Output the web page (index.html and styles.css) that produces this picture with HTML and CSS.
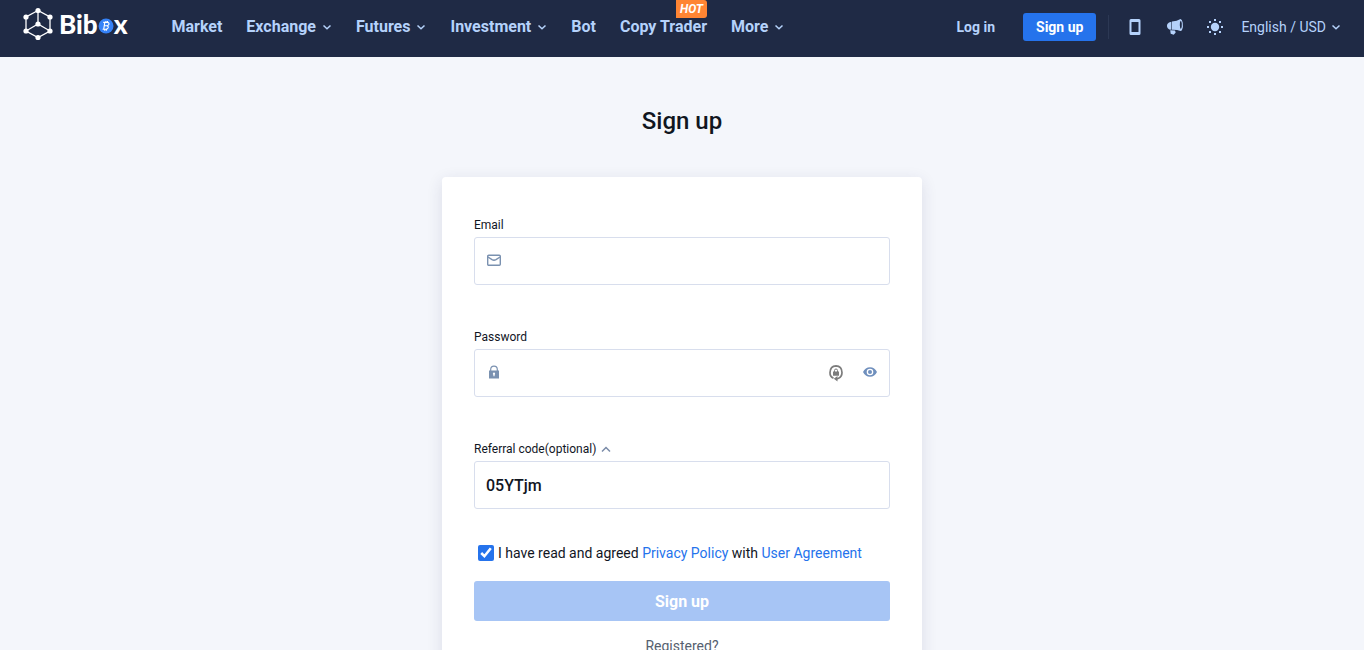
FILE: index.html
```
<!DOCTYPE html>
<html lang="en">
<head>
  <meta charset="utf-8">
  <title>Sign up | Bibox</title>
  <link rel="stylesheet" href="styles.css">
</head>
<body>
  <header class="header">
    <a class="logo" href="#" aria-label="Bibox">
      <svg class="logo-mark" viewBox="0 0 32 34">
        <path d="M15 3.500 3 10v14l12 6.500L27 24V10ZM15 3.500V17M3 24l12-7 12 7" fill="none" stroke="currentColor" stroke-width="1.300"/>
        <g fill="currentColor">
          <circle cx="15" cy="3.500" r="2.600"/>
          <circle cx="27" cy="10" r="2.600"/>
          <circle cx="27" cy="24" r="2.600"/>
          <circle cx="15" cy="30.500" r="2.600"/>
          <circle cx="3" cy="24" r="2.600"/>
          <circle cx="3" cy="10" r="2.600"/>
          <circle cx="15" cy="17" r="2.600"/>
        </g>
      </svg>
      <span class="logo-text">Bib</span>
      <svg class="logo-coin" viewBox="0 0 16 16">
        <circle cx="8" cy="8" r="7.500" fill="#3582f7"/>
        <path d="M6.800 4.300 5.700 11.300M5.200 4.400h4.200q2 .3 1.500 1.900-.4 1.400-2.300 1.500H6.500M8.600 7.800q2 .2 1.600 1.900-.4 1.500-2.300 1.500H4.600M8 3 7.800 4.400M9.600 3 9.400 4.400M6.900 11.200 6.700 12.700M8.500 11.200 8.300 12.700" fill="none" stroke="#fff" stroke-width="1.100"/>
      </svg>
      <span class="logo-text">x</span>
    </a>

    <nav class="nav">
      <a href="#">Market</a>
      <a href="#">Exchange <svg class="chevron" viewBox="0 0 10 10"><path d="m1.500 3.500 3.500 3.300 3.500-3.300"/></svg></a>
      <a href="#">Futures <svg class="chevron" viewBox="0 0 10 10"><path d="m1.500 3.500 3.500 3.300 3.500-3.300"/></svg></a>
      <a href="#">Investment <svg class="chevron" viewBox="0 0 10 10"><path d="m1.500 3.500 3.500 3.300 3.500-3.300"/></svg></a>
      <a href="#">Bot</a>
      <a href="#" class="has-badge">Copy Trader<span class="badge">HOT</span></a>
      <a href="#">More <svg class="chevron" viewBox="0 0 10 10"><path d="m1.500 3.500 3.500 3.300 3.500-3.300"/></svg></a>
    </nav>

    <div class="actions">
      <a class="login" href="#">Log in</a>
      <a class="signup" href="#">Sign up</a>
      <div class="tools">
        <button type="button" class="icon-button" aria-label="Download app">
          <svg viewBox="0 0 18 18"><path fill-rule="evenodd" fill="currentColor" d="M5 1h8q1.500 0 1.500 1.500v13Q14.500 17 13 17H5q-1.500 0-1.500-1.500v-13Q3.500 1 5 1Zm.5 3v10h7V4Z"/></svg>
        </button>
        <button type="button" class="icon-button" aria-label="Announcements">
          <svg viewBox="0 0 18 18"><path fill="currentColor" d="M6 3.500Q11 3 14.500 1q1.500.2 2.200 3.500.8 4.500-.7 7.500-.5 1-1.500 1Q11 11.500 6 11.700Z"/><path fill="#1f2a45" d="M14.600 2.800q.9.300 1.200 2.700.3 3.500-.9 5.500-.9-.5-1.100-3.800-.1-3.200.8-4.400Z"/><path fill="currentColor" d="M5.400 3.800 3 4.500Q.8 5.500.9 8q.2 2.500 2.300 3.400L5.400 11.700ZM4.200 12.300l4.800.2.700 2-2 2.200-3-1Z"/></svg>
        </button>
        <button type="button" class="icon-button" aria-label="Switch theme">
          <svg viewBox="0 0 18 18"><circle cx="9" cy="9" r="4.200" fill="currentColor"/><path d="M8 1h2v2H8ZM8 15h2v2H8ZM1 8h2v2H1ZM15 8h2v2h-2ZM3 3h2v2H3ZM13 3h2v2h-2ZM3 13h2v2H3ZM13 13h2v2h-2Z" fill="currentColor"/></svg>
        </button>
      </div>
      <button type="button" class="locale">English / USD <svg class="chevron" viewBox="0 0 10 10"><path d="m1.500 3.500 3.500 3.300 3.500-3.300"/></svg></button>
    </div>
  </header>

  <main class="main">
    <h1>Sign up</h1>
    <form class="card">
      <div class="field">
        <label for="email">Email</label>
        <div class="input-box">
          <svg class="input-icon" viewBox="0 0 16 16" fill="none" stroke="currentColor" stroke-width="1.400"><rect x="1.700" y="2.200" width="12.600" height="10" rx="1"/><path d="M2 4 6 6.700q2 1 4 0l4-2.700"/></svg>
          <input type="email" id="email">
        </div>
      </div>

      <div class="field">
        <label for="password">Password</label>
        <div class="input-box">
          <svg class="input-icon" viewBox="0 0 16 16"><path d="M4.700 6V4.500q0-3.300 3.300-3.300t3.300 3.300V6" fill="none" stroke="currentColor" stroke-width="1.200"/><path fill="currentColor" fill-rule="evenodd" d="M3 5.500h10V13.500H3ZM8 7.500a1.200 1.200 0 0 0-.6 2.200v1.600h1.200V9.700A1.200 1.200 0 0 0 8 7.500Z"/></svg>
          <input type="password" id="password">
          <button type="button" class="input-button generate" aria-label="Generate password">
            <svg viewBox="0 0 16 18"><path d="M5.500 14.300A6.100 6.100 0 0 1 2 8.500Q2.200 2 8 1.800q5.800.2 6 6.700 0 4-3.500 5.800l-2 .7" fill="none" stroke="currentColor" stroke-width="1.700"/><path d="M6.500 8V6.500Q6.500 5 8 5t1.500 1.500V8" fill="none" stroke="currentColor"/><path d="M5 7.500h6v4.300H5ZM9.500 12v5.500L5.800 14.800Z" fill="currentColor"/></svg>
          </button>
          <button type="button" class="input-button" aria-label="Show password">
            <svg viewBox="0 0 16 18"><path fill="currentColor" fill-rule="evenodd" d="M1 8Q3.300 3.300 8 3.300T15 8q-2.300 4.700-7 4.700T1 8Zm3.700 0a3.300 3.300 0 1 0 6.600 0 3.300 3.300 0 1 0-6.600 0Z"/><circle cx="8" cy="8" r="2" fill="currentColor"/></svg>
          </button>
        </div>
      </div>

      <div class="field">
        <label for="referral">Referral code(optional) <svg class="chevron-up" viewBox="0 0 10 10"><path d="m1 7.500 4-4 4 4"/></svg></label>
        <div class="input-box">
          <input type="text" id="referral" value="05YTjm">
        </div>
      </div>

      <div class="agreement">
        <input type="checkbox" id="agree" checked>
        <label for="agree">I have read and agreed <a href="#">Privacy Policy</a> with <a href="#">User Agreement</a></label>
      </div>

      <button type="submit" class="submit" disabled>Sign up</button>
      <a class="registered" href="#">Registered?</a>
    </form>
  </main>
</body>
</html>
```

FILE: styles.css
```
* {
  box-sizing: border-box;
}
body {
  margin: 0;
  background: #f4f6fb;
  color: #11161f;
  font-family: Roboto, "Liberation Sans", sans-serif;
  font-size: 14px;
}
a {
  color: #2573ec;
  text-decoration: none;
}
button, input {
  font-family: inherit;
}
button {
  padding: 0;
  border: none;
  background: none;
  cursor: pointer;
}

.header {
  display: flex;
  align-items: flex-start;
  height: 57px;
  padding: 0 23px;
  background: #1f2a45;
  color: #b5d2fb;
  white-space: nowrap;
}
.header a {
  color: inherit;
}
.header .logo {
  display: flex;
  align-items: center;
  height: 48px;
  margin-right: 44px;
  color: #fff;
}
.logo-mark {
  width: 32px;
  height: 34px;
  margin-right: 4px;
}
.logo-coin {
  width: 16px;
  height: 16px;
  margin-top: 4px;
}
.logo-text {
  font-family: Lato, sans-serif;
  font-size: 26px;
  font-weight: 900;
  line-height: 48px;
}

.nav {
  display: flex;
  gap: 24px;
  font-size: 16px;
  font-weight: 700;
  line-height: 53px;
}
.nav a {
  display: flex;
  align-items: center;
  gap: 6px;
}
.has-badge {
  position: relative;
}
.badge {
  position: absolute;
  top: 0;
  right: 0;
  height: 18px;
  padding: 0 4px;
  border-radius: 0 3px 3px 0;
  background: #ff8533;
  color: #fff;
  font-size: 12px;
  font-style: italic;
  line-height: 18px;
}
.chevron {
  width: 10px;
  height: 10px;
}
.chevron path, .chevron-up path {
  fill: none;
  stroke: currentColor;
  stroke-width: 1.5;
}

.actions {
  display: flex;
  align-items: center;
  height: 53px;
  margin-left: auto;
}
.login {
  margin-right: 28px;
  font-weight: 700;
}
.header .signup {
  padding: 0 13px;
  border-radius: 3px;
  background: #2573ec;
  color: #fff;
  font-weight: 700;
  line-height: 28px;
}
.tools {
  display: flex;
  align-items: center;
  gap: 22px;
  height: 24px;
  margin: 0 17px 0 12px;
  padding-left: 17px;
  border-left: 1px solid #2c3854;
}
.icon-button {
  width: 18px;
  height: 18px;
  color: inherit;
}
.icon-button svg {
  display: block;
}
.locale {
  display: flex;
  align-items: center;
  gap: 5px;
  color: inherit;
  font-size: 14px;
}

.main {
  padding: 48px 16px;
}
h1 {
  margin: 0 0 40px;
  font-size: 24px;
  font-weight: 500;
  line-height: 32px;
  text-align: center;
}
.card {
  max-width: 480px;
  margin: 0 auto;
  padding: 40px 32px;
  border-radius: 4px;
  background: #fff;
  box-shadow: 0 4px 16px rgba(40, 40, 90, 0.12);
}
.field + .field {
  margin-top: 44px;
}
.field label {
  display: flex;
  align-items: center;
  gap: 5px;
  height: 16px;
  margin-bottom: 4px;
  font-size: 12px;
}
.chevron-up {
  width: 10px;
  height: 10px;
  color: #7a8ba8;
}
.input-box {
  display: flex;
  align-items: center;
  height: 48px;
  padding: 0 11px;
  border: 1px solid #d8deed;
  border-radius: 3px;
}
.input-box:focus-within {
  border-color: #2573ec;
}
.input-icon {
  flex: none;
  width: 16px;
  height: 16px;
  margin-right: 8px;
  color: #7a91b0;
}
.input-box input {
  flex: 1;
  min-width: 0;
  padding: 0;
  border: none;
  outline: none;
  background: none;
  color: inherit;
  font-size: 16px;
  font-weight: 500;
}
.input-button {
  width: 16px;
  height: 18px;
  color: #6f8fbd;
}
.input-button svg {
  display: block;
}
.generate {
  margin-right: 18px;
  color: #7d7d7d;
}

.agreement {
  display: flex;
  align-items: center;
  margin: 36px 0 20px;
  line-height: 16px;
}
.agreement input {
  width: 16px;
  height: 16px;
  margin: 0 4px;
  accent-color: #2573ec;
}
.submit {
  display: block;
  width: 100%;
  height: 40px;
  border-radius: 3px;
  background: #a7c5f5;
  color: #fff;
  font-size: 16px;
  font-weight: 700;
}
.registered {
  display: block;
  margin-top: 16px;
  color: #56606f;
  line-height: 18px;
  text-align: center;
}
```
